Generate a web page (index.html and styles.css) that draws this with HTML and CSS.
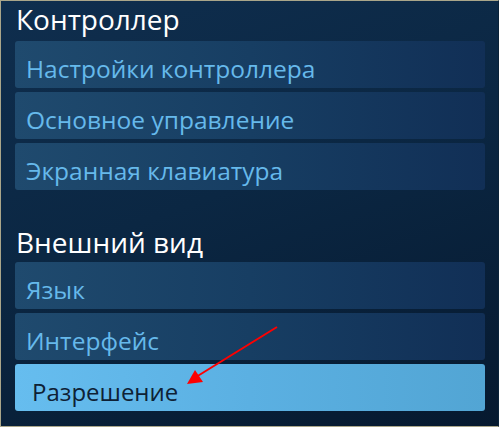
FILE: index.html
```html
<!DOCTYPE html>
<html lang="ru">
<head>
<meta charset="utf-8">
<link rel="stylesheet" href="styles.css">
</head>
<body>
<div class="screen">
  <section class="group">
    <h2 class="group-title">Контроллер</h2>
    <div class="list">
      <div class="item">Настройки контроллера</div>
      <div class="item">Основное управление</div>
      <div class="item">Экранная клавиатура</div>
    </div>
  </section>
  <section class="group group-second">
    <h2 class="group-title">Внешний вид</h2>
    <div class="list">
      <div class="item">Язык</div>
      <div class="item">Интерфейс</div>
      <div class="item item-active">Разрешение</div>
    </div>
  </section>
  <svg class="arrow" width="499" height="427" viewBox="0 0 499 427">
    <line x1="277" y1="327" x2="196" y2="377" stroke="#ff0000" stroke-width="2"/>
    <polygon points="187,384 195,370 203,382" fill="#ff0000"/>
  </svg>
</div>
</body>
</html>
```
FILE: styles.css
```css
html, body {
  margin: 0;
  padding: 0;
}
body {
  width: 499px;
  height: 427px;
  overflow: hidden;
  font-family: "Open Sans", "Noto Sans", sans-serif;
}
.screen {
  position: relative;
  box-sizing: border-box;
  width: 499px;
  height: 427px;
  border: 1px solid #aaa68a;
  border-right-color: #0a2238;
  padding: 0 13px 0 14px;
  background: linear-gradient(160deg, #0f2e4e 0%, #0b2743 45%, #06192f 100%);
}
.group-title {
  margin: 0;
  height: 40px;
  font-weight: 400;
  font-size: 28px;
  line-height: 36px;
  color: #ffffff;
  padding-left: 1px;
  box-sizing: border-box;
}
.group-second {
  margin-top: 32px;
}
.group-second .group-title {
  line-height: 40px;
}
.list {
  display: flex;
  flex-direction: column;
  gap: 4px;
}
.item {
  height: 47px;
  box-sizing: border-box;
  padding: 13px 0 0 11px;
  border-radius: 3px;
  font-size: 24.5px;
  line-height: 30px;
  color: #66b9eb;
  background: linear-gradient(90deg, #1f4a6e 0%, #173e63 50%, #112f56 100%);
}
.item-active {
  padding: 13px 0 0 17px;
  font-size: 24px;
  color: #0e2135;
  background: linear-gradient(90deg, #66bdef 0%, #5bb0e2 50%, #52a5d4 100%);
}
.arrow {
  position: absolute;
  left: -1px;
  top: -1px;
  pointer-events: none;
}
```
